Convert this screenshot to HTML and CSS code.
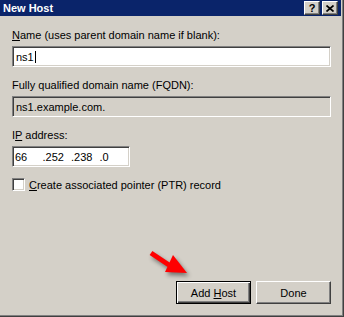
FILE: index.html
```html
<!DOCTYPE html>
<html lang="en">
  <head>
    <meta charset="UTF-8" />
    <title>New Host</title>
    <link rel="stylesheet" href="styles.css">
  </head>
  <body>
    <div class="window">
      <div class="titlebar">
        <span class="title">New Host</span>
        <div class="caption-btns">
          <span class="cap-btn help">?</span>
          <span class="cap-btn close">
            <svg width="8" height="7" viewBox="0 0 8 7">
              <path d="M0.5 0.5 L7.5 6.5 M7.5 0.5 L0.5 6.5" stroke="#000" stroke-width="1.7" fill="none" />
            </svg>
          </span>
        </div>
      </div>

      <div class="content">
        <label class="field-label"><u>N</u>ame (uses parent domain name if blank):</label>
        <div class="textbox"><span>ns1</span><span class="caret"></span></div>

        <label class="field-label">Fully qualified domain name (FQDN):</label>
        <div class="textbox readonly">ns1.example.com.</div>

        <label class="field-label">I<u>P</u> address:</label>
        <div class="textbox ip">
          <span class="octet">66</span>
          <span class="octet">.252</span>
          <span class="octet">.238</span>
          <span class="octet">.0</span>
        </div>

        <div class="check-row">
          <span class="checkbox"></span>
          <span><u>C</u>reate associated pointer (PTR) record</span>
        </div>

        <div class="actions">
          <button class="btn default">Add <u>H</u>ost</button>
          <button class="btn">Done</button>
        </div>
      </div>

      <!-- annotation arrow over the dialog -->
      <svg class="arrow" width="50" height="36" viewBox="0 0 50 36">
        <line x1="6" y1="5" x2="24" y2="17" stroke="#ff0000" stroke-width="5" />
        <polygon points="28,7 42,25 20,24" fill="#ff0000" />
      </svg>
    </div>
  </body>
</html>
```

FILE: styles.css
```css
body {
  margin: 0;
  background: #d4d0c8;
  font-family: "Liberation Sans", Arial, sans-serif;
  font-size: 11px;
  color: #000;
}

.window {
  position: relative;
  width: 344px;
  height: 317px;
  box-sizing: border-box;
  display: flex;
  flex-direction: column;
  padding: 0 2px 2px 0;
  border-right: 1px solid #404040;
  border-bottom: 1px solid #404040;
  box-shadow: inset -1px -1px 0 #808080;
}

.titlebar {
  height: 16px;
  display: flex;
  justify-content: space-between;
  align-items: flex-start;
  background: #0a246a;
  color: #fff;
  padding: 0 3px 0 3px;
}

.title {
  font-weight: bold;
  line-height: 16px;
}

.caption-btns {
  display: flex;
  gap: 2px;
  padding-top: 1px;
}

.cap-btn {
  width: 14px;
  height: 12px;
  display: flex;
  align-items: center;
  justify-content: center;
  background: #d4d0c8;
  color: #000;
  border-top: 1px solid #fff;
  border-left: 1px solid #fff;
  border-right: 1px solid #404040;
  border-bottom: 1px solid #404040;
  box-shadow: inset -1px -1px 0 #808080;
}

.help {
  font-weight: bold;
  font-size: 11px;
  line-height: 12px;
}

.content {
  flex: 1;
  display: flex;
  flex-direction: column;
  align-items: flex-start;
  padding: 13px 10px 0 12px;
}

.field-label {
  line-height: 13px;
  margin-bottom: 4px;
}

.textbox {
  box-sizing: border-box;
  width: 100%;
  height: 21px;
  display: flex;
  align-items: center;
  padding: 0 1px 0 3px;
  margin-bottom: 12px;
  background: #fff;
  border-top: 1px solid #808080;
  border-left: 1px solid #808080;
  border-right: 1px solid #fff;
  border-bottom: 1px solid #fff;
  box-shadow: inset 1px 1px 0 #404040, inset -1px -1px 0 #d4d0c8;
}

.readonly {
  background: #d4d0c8;
}

.caret {
  width: 1px;
  height: 12px;
  margin-left: 1px;
  background: #000;
}

.ip {
  width: 118px;
  padding-left: 2px;
}

.octet {
  width: 29px;
}

.octet:first-child {
  width: 28px;
}

.check-row {
  display: flex;
  align-items: center;
  gap: 4px;
  margin-top: -1px;
}

.checkbox {
  box-sizing: border-box;
  width: 13px;
  height: 13px;
  background: #fff;
  border-top: 1px solid #808080;
  border-left: 1px solid #808080;
  border-right: 1px solid #fff;
  border-bottom: 1px solid #fff;
  box-shadow: inset 1px 1px 0 #404040, inset -1px -1px 0 #d4d0c8;
}

.actions {
  align-self: flex-end;
  margin-top: auto;
  margin-bottom: 10px;
  display: flex;
  gap: 5px;
}

.btn {
  box-sizing: border-box;
  width: 75px;
  height: 23px;
  padding: 0;
  font-family: inherit;
  font-size: 11px;
  color: #000;
  background: #d4d0c8;
  border-top: 1px solid #fff;
  border-left: 1px solid #fff;
  border-right: 1px solid #404040;
  border-bottom: 1px solid #404040;
  box-shadow: inset -1px -1px 0 #808080;
}

.default {
  border: 1px solid #000;
  box-shadow: inset 1px 1px 0 #fff, inset -1px -1px 0 #404040, inset -2px -2px 0 #808080;
}

.arrow {
  position: absolute;
  left: 145px;
  top: 248px;
  filter: drop-shadow(2px 3px 2px rgba(0, 0, 0, 0.45));
}
```
